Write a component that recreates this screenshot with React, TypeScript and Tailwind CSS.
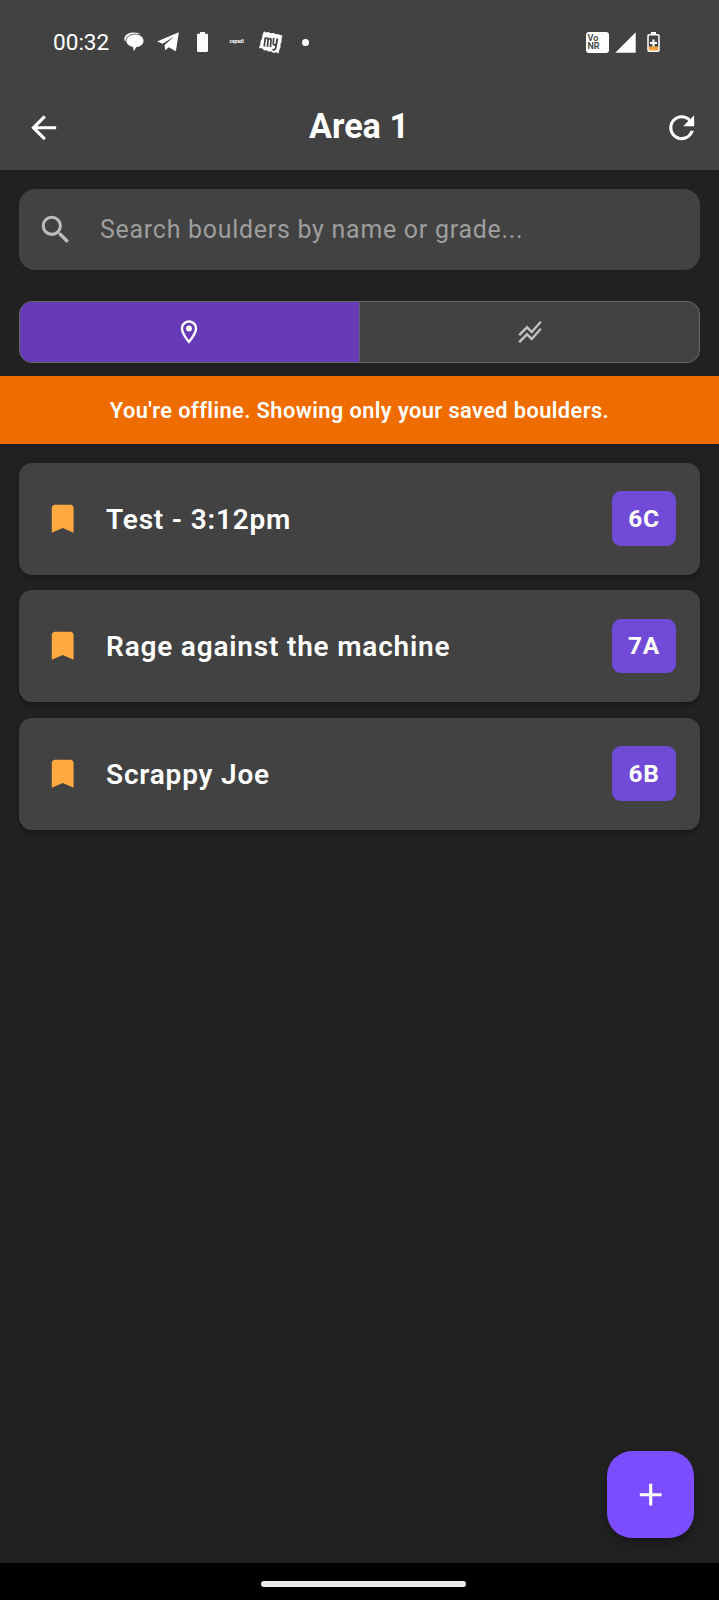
import { MdArrowBack, MdBookmark, MdRefresh, MdSearch, MdAdd } from 'react-icons/md';

const boulders = [
  { id: 1, name: 'Test - 3:12pm', grade: '6C' },
  { id: 2, name: 'Rage against the machine', grade: '7A' },
  { id: 3, name: 'Scrappy Joe', grade: '6B' },
];

function StatusBar() {
  return (
    <div className="h-[84px] pl-[53px] pr-[59px] flex items-center justify-between">
      <div className="flex items-center">
        <span className="w-[70px] pt-[2px] text-[22.600px] leading-none whitespace-nowrap">00:32</span>
        <svg className="w-5 h-5 ml-[0.5px]" viewBox="0 0 20 20" fill="currentColor">
          <path d="M0.300 7C.8 2.800 4.500.5 9.500.5c3.300 0 5.800.8 7.300 2-1.600-.5-3.300-.7-5.300-.7C7 1.800 3 3.500 1.600 7.800 1.500 8.500 1.600 9 1.700 9.500.6 9 .2 8 .3 7z" />
          <path d="M11 2.500c5 0 8.500 2.600 8.500 6.300 0 3.500-3 5.900-7 6.300L9.700 19.200 9 15C5.500 14.300 2.300 12 2.300 8.800 2.300 5.200 6.300 2.500 11 2.500z" />
        </svg>
        <svg className="w-[22px] h-5 ml-[13px]" viewBox="0 0 22 20" fill="currentColor">
          <path d="M21.800.3 18.900 19.300 11.800 15.200 8.300 18.200 7.500 13 17 4.800 5.500 11.700 0 9.600z" />
        </svg>
        <svg className="w-[11px] h-5 ml-[18.500px]" viewBox="0 0 11 20" fill="currentColor">
          <path d="M3 0h5v1.700h1.800c.7 0 1.200.5 1.200 1.200v15.900c0 .7-.5 1.200-1.200 1.200H1.200C.5 20 0 19.500 0 18.800V2.900c0-.7.5-1.200 1.200-1.200H3z" />
        </svg>
        <span className="w-[15px] ml-[21.500px] text-[4.800px] leading-none font-bold">capadi</span>
        <svg className="w-6 h-[23px] ml-[14.500px]" viewBox="0 0 24 23">
          <path
            d="M5 .3 7 1.500 9.500 1l2 1.300 3-.3 2.500 1.200 2.500 0 4 1.500-1 3 .2 2.500-1.200 3 0 3-1.300 3-.7 3.300-2.500-1.300-2.500.8-2-1.500-3 0-2-1.300-2.500.3L3.500 17.500 0 17l1.300-3.500.2-3 1.500-3 .5-3.500z"
            fill="currentColor"
          />
          <g fill="none" stroke="#424242" strokeWidth="1.700">
            <path d="M5.200 15.500 6.300 6.500M6.100 8.300c1.200-1.800 3.200-1.500 3 .4L8.400 15.800M9.100 8.800c1.200-1.800 3.200-1.500 3 .4l-.7 7M14.700 7l-.5 5.500c0 2 2.200 2 2.900.5l1.400-5.500M18.300 8.500 16.700 17c-.4 1.800-2 2.200-3.200 1.300" />
          </g>
        </svg>
        <span className="size-[7px] ml-[19px] rounded-full bg-white" />
      </div>
      <div className="flex items-center">
        <div className="w-[23.500px] h-[21px] rounded-[3px] bg-white text-[#424242] pl-[2px] pt-[2px] text-[9px] leading-[8.500px] font-semibold">
          Vo
          <br />
          NR
        </div>
        <svg className="w-[21px] h-[21px] ml-[6px]" viewBox="0 0 21 21" fill="currentColor">
          <path d="M20.700.3v20.400H.3z" />
        </svg>
        <svg className="w-[13px] h-5 ml-[11px]" viewBox="0 0 13 20">
          <path d="M2 3.300h9v14.500H2z" fill="#424242" />
          <path d="M1.500 14.500h10v4.500h-10z" fill="#f9a13c" />
          <path d="M4 0h5v2H4z" fill="#fff" />
          <path d="M2.200 2.700h8.600c.7 0 1.200.5 1.200 1.200V18c0 .7-.5 1.200-1.200 1.200H2.200C1.500 19.200 1 18.700 1 18V3.900c0-.7.5-1.200 1.200-1.200z" fill="none" stroke="#fff" strokeWidth="1.500" />
          <path d="M6.500 7.500v7M3 11h7" stroke="#fff" strokeWidth="2.200" />
        </svg>
      </div>
    </div>
  );
}

function Header() {
  return (
    <header className="h-[170.300px] bg-[#424242]">
      <StatusBar />
      <div className="h-[86.500px] pl-[25px] pr-[19px] flex items-center justify-between">
        <MdArrowBack size={37.4} />
        <h1 className="text-[34.200px] leading-none font-bold -mt-[2px] mr-[7px]">Area 1</h1>
        <MdRefresh size={37.4} />
      </div>
    </header>
  );
}

function Filters() {
  return (
    <div className="px-[18.700px] pt-[18.700px]">
      <div className="h-[81px] rounded-[16px] bg-[#424242] flex items-center pl-[18px]">
        <MdSearch size={37.4} className="text-[#bdbdbd]" />
        <span className="ml-[26px] text-[24.900px] tracking-[0.760px] text-[#9e9e9e]">
          Search boulders by name or grade...
        </span>
      </div>
      <div className="h-[62px] mt-[31px] rounded-[13px] border border-[#686868] bg-[#424242] overflow-hidden grid grid-cols-2">
        <div className="flex items-center justify-center bg-[#673ab7] border-r border-[#616161]">
          <svg className="size-[28px]" viewBox="0 0 24 24" fill="currentColor">
            <path d="M12 2C8.130 2 5 5.130 5 9c0 5.250 7 13 7 13s7-7.750 7-13c0-3.870-3.130-7-7-7zM7 9c0-2.760 2.240-5 5-5s5 2.240 5 5c0 2.880-2.880 7.190-5 9.880C9.920 16.210 7 11.850 7 9z" />
            <circle cx="12" cy="9" r="2.500" />
          </svg>
        </div>
        <div className="flex items-center justify-center pl-[1px] text-[#c2c2c2]">
          <svg className="size-[28px]" viewBox="0 0 24 24" fill="currentColor">
            <path d="M2 19.990l7.500-7.510 4 4 7.090-7.970L22 9.920l-8.500 9.560-4-4-6 6.010-1.500-1.500zm1.500-4.500l6-6.010 4 4L22 3.920l-1.410-1.410-7.090 7.970-4-4L2 13.990l1.500 1.500z" />
          </svg>
        </div>
      </div>
    </div>
  );
}

export default function App() {
  return (
    <div className="w-[719px] h-[1600px] flex flex-col overflow-hidden bg-[#212121] text-white font-['Roboto',sans-serif]">
      <Header />
      <Filters />
      <div className="h-[68px] mt-[13px] pt-[3px] bg-[#ef6c00] flex items-center justify-center text-[21.800px] font-semibold tracking-[0.410px]">
        You're offline. Showing only your saved boulders.
      </div>
      <ul className="flex-1 px-[18.700px] pt-[18.700px] flex flex-col gap-[15.500px]">
        {boulders.map((boulder) => (
          <li
            key={boulder.id}
            className="h-[112px] rounded-[13px] bg-[#424242] shadow-[0_2px_4px_rgba(0,0,0,0.35)] flex items-center pl-[25px] pr-[24.500px]"
          >
            <MdBookmark size={37.4} className="text-[#ffa940]" />
            <span className="ml-[25px] pt-[2px] flex-1 text-[28px] font-semibold tracking-[0.800px]">
              {boulder.name}
            </span>
            <span className="w-[63.500px] h-[54.500px] rounded-[9px] bg-[#714bd8] flex items-center justify-center pt-[1px] text-[24.500px] font-bold tracking-[0.780px]">
              {boulder.grade}
            </span>
          </li>
        ))}
      </ul>
      <button className="size-[87px] self-end mr-[25px] mb-[25px] rounded-[25px] bg-[#7c4dff] shadow-[0_5px_10px_rgba(0,0,0,0.3)] flex items-center justify-center">
        <MdAdd size={37.4} />
      </button>
      <div className="h-[37px] pl-[8px] bg-black flex items-center justify-center">
        <span className="w-[205px] h-[6.500px] mt-[5px] rounded-full bg-[#ececec]" />
      </div>
    </div>
  );
}
